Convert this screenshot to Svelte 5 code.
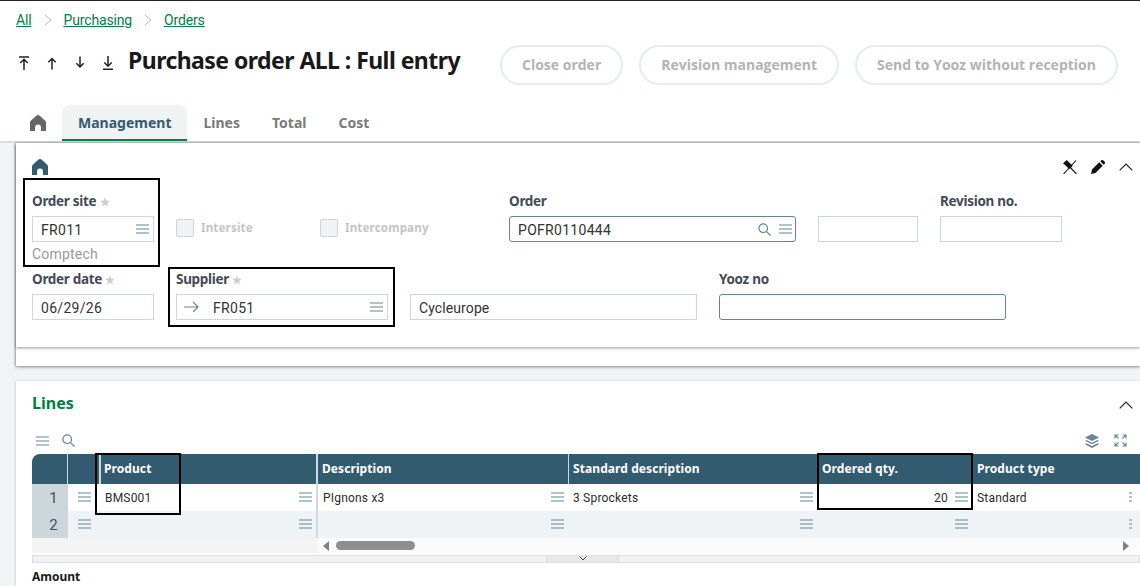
<script>
  const tabs = ['Lines', 'Total', 'Cost'];
  const cols = ['Product', 'Description', 'Standard description', 'Ordered qty.', 'Product type'];
  const rows = [
    { n: 1, cells: ['BMS001', 'PIgnons x3', '3 Sprockets', '20', 'Standard'] },
    { n: 2, cells: ['', '', '', '', ''] }
  ];
</script>

{#snippet menu(cls = '')}
  <svg class="menu {cls}" viewBox="0 0 13 10" aria-hidden="true"><path d="M0 1h13M0 5h13M0 9h13" /></svg>
{/snippet}
{#snippet home(cls = '')}
  <svg class="home {cls}" viewBox="0 0 16 16" aria-hidden="true"><path d="M0 16V7.500C0 6.600.4 6 1 5.400L6.500.6c.9-.8 2.100-.8 3 0L15 5.400c.6.6 1 1.200 1 2.100V16h-5v-3.500a3 3 0 0 0-6 0V16z" /></svg>
{/snippet}
{#snippet search(cls = '')}
  <svg class="search {cls}" viewBox="0 0 13 13" aria-hidden="true"><circle cx="5.200" cy="5.200" r="4.300" /><path d="M8.300 8.300l4.200 4.200" /></svg>
{/snippet}
{#snippet chevUp()}
  <svg class="chev" viewBox="0 0 14 8" aria-hidden="true"><path d="M.7 7.300L7 1l6.300 6.300" /></svg>
{/snippet}

<div class="page">
  <nav class="crumbs">
    <a href="#all">All</a><svg class="sep" viewBox="0 0 8 12"><path d="M1 1l6 5-6 5" /></svg>
    <a href="#purchasing">Purchasing</a><svg class="sep" viewBox="0 0 8 12"><path d="M1 1l6 5-6 5" /></svg>
    <a href="#orders">Orders</a>
  </nav>

  <header class="head">
    <div class="arrows">
      <svg viewBox="0 0 12 14"><path d="M1 1h10M6 14V3.500M2.300 7L6 3.300 9.700 7" /></svg>
      <svg viewBox="0 0 12 14"><path d="M6 13.500V2.500M2.300 6.200L6 2.500 9.700 6.200" /></svg>
      <svg viewBox="0 0 12 14"><path d="M6 .5v10.500M2.300 7.300L6 11 9.700 7.300" /></svg>
      <svg viewBox="0 0 12 14"><path d="M6 0v10M2.300 6.500L6 10.200 9.700 6.500M1 13.300h10" /></svg>
    </div>
    <h1>Purchase order ALL : Full entry</h1>
    <div class="actions">
      <button disabled>Close order</button>
      <button disabled>Revision management</button>
      <button disabled>Send to Yooz without reception</button>
    </div>
  </header>

  <div class="tabs">
    <span class="homeTab">{@render home()}</span>
    <span class="tab active">Management</span>
    {#each tabs as t}<span class="tab">{t}</span>{/each}
  </div>

  <main class="body">
    <section class="card form">
      <div class="formInner">
        <div class="cardTop">
          {@render home('blue')}
          <div class="tools">
            <svg class="pin" viewBox="0 0 14 14"><path d="M0 3.300L3.800 0l6 6-3.500 3z" fill="#111" /><path d="M.5 14L13 .5M4 4l9.500 10" fill="none" stroke="#111" stroke-width="1.100" /></svg>
            <svg class="pen" viewBox="0 0 14 14"><path d="M0 14l1-4.500L8.200 2.300l3.500 3.500L4.500 13zM9.200 1.300L10 .5c.7-.7 1.700-.7 2.400 0l1.100 1.100c.7.7.7 1.700 0 2.400l-.8.8z" /></svg>
            {@render chevUp()}
          </div>
        </div>
        <div class="row first">
          <div class="f w122">
            <label>Order site <i>★</i></label>
            <div class="input">FR011{@render menu('end')}</div>
            <div class="hint">Comptech</div>
          </div>
          <div class="check w122"><span class="box"></span>Intersite</div>
          <div class="check w122"><span class="box"></span>Intercompany</div>
          <div class="f w287 order">
            <label>Order</label>
            <div class="input focus">POFR0110444<span class="endIcons">{@render search()}{@render menu()}</span></div>
          </div>
          <div class="f w100"><label>&nbsp;</label><div class="input"></div></div>
          <div class="f w122"><label>Revision no.</label><div class="input"></div></div>
        </div>
        <div class="row second">
          <div class="f w122"><label>Order date <i>★</i></label><div class="input">06/29/26</div></div>
          <div class="f w212">
            <label>Supplier <i>★</i></label>
            <div class="input sup">
              <svg class="arrow" viewBox="0 0 15 12"><path d="M0 6h14M9 1l5 5-5 5" /></svg>FR051{@render menu('end')}
            </div>
          </div>
          <div class="f w287"><label>&nbsp;</label><div class="input small">Cycleurope</div></div>
          <div class="f w287"><label>Yooz no</label><div class="input focus"></div></div>
        </div>
      </div>
    </section>

    <section class="card lines">
      <div class="linesTop">
        <h2>Lines</h2>
        {@render chevUp()}
      </div>
      <div class="gridTools">
        {@render menu()}{@render search()}
        <span class="right">
          <svg class="layers" viewBox="0 0 16 14"><path d="M8 0l7 3.500-7 3.500-7-3.500z" /><path d="M2.500 6L8 8.800 13.500 6 15 6.800 8 10.300 1 6.800z" /><path d="M2.500 9.300L8 12 13.500 9.300 15 10.200 8 14 1 10.200z" /></svg>
          <svg class="expand" viewBox="0 0 13 13"><path d="M1 4.500V1h3.500M1 1l3.500 3.500M12 4.500V1H8.500M12 1L8.500 4.500M1 8.500V12h3.500M1 12l3.500-3.500M12 8.500V12H8.500M12 12L8.500 8.500" /></svg>
        </span>
      </div>
      <div class="table">
        <div class="thead">
          <span class="th corner"></span>
          <span class="th tool"></span>
          {#each cols as c, i}<span class="th c{i}">{c}</span>{/each}
        </div>
        {#each rows as r}
          <div class="tr">
            <span class="td num">{r.n}</span>
            <span class="td tool">{@render menu()}</span>
            {#each r.cells as cell, i}
              <span class="td c{i}" class:qty={i === 3}>
                <span class="val">{cell}</span>
                {#if i === 4}<span class="clipMenu">{@render menu()}</span>{:else}{@render menu()}{/if}
              </span>
            {/each}
          </div>
        {/each}
        <div class="scroll">
          <span class="scrollFill"></span>
          <div class="track">
            <svg viewBox="0 0 6 10"><path d="M6 0v10L0 5z" /></svg>
            <span class="thumb"></span>
            <svg class="next" viewBox="0 0 6 10"><path d="M0 0v10l6-5z" /></svg>
          </div>
        </div>
      </div>
      <div class="splitter"><span class="grip"><svg viewBox="0 0 8 5"><path d="M.5.500L4 4 7.500.500" /></svg></span></div>
      <div class="amount">Amount</div>
    </section>
  </main>

  <span class="mark m1"></span>
  <span class="mark m2"></span>
  <span class="mark m3"></span>
  <span class="mark m4"></span>
</div>

<style>
  :global(body) { margin: 0; background: #fff; }
  .page {
    position: relative; width: 1140px; height: 586px; overflow: hidden;
    border-top: 1px solid #222; box-sizing: border-box; background: #fff;
    font-family: "Noto Sans", sans-serif; color: #1a1a1a;
  }
  .crumbs { display: flex; align-items: center; height: 18px; padding: 10px 0 0 16px; font: 14px/18px Roboto, sans-serif; letter-spacing: -.15px; }
  .crumbs a { color: #007e45; text-decoration: underline; }
  .sep { width: 8px; height: 12px; margin: 0 12px; fill: none; stroke: #b8b8b8; stroke-width: 1; }
  .head { display: flex; align-items: center; height: 50px; margin-top: 6px; padding-left: 18px; }
  .arrows { display: flex; gap: 16px; width: 110px; flex: none; }
  .arrows svg { width: 12px; height: 14px; fill: none; stroke: #222; stroke-width: 1.500; margin-top: 5px; }
  h1 { margin: 0; width: 372px; flex: none; font: 700 23px/30px "Noto Sans", sans-serif; letter-spacing: -.55px; color: #191919; white-space: nowrap; }
  .actions { display: flex; gap: 16px; margin-top: 9px; }
  button {
    height: 40px; padding: 0 20px; border: 2px solid #e6ebed; border-radius: 20px; background: #fff;
    font: 700 14px/20px "Open Sans", sans-serif; color: #b3b3b3; white-space: nowrap;
  }
  .tabs { display: flex; height: 36px; margin-top: 20px; padding-left: 30px; align-items: stretch; font: 700 14px/20px "Noto Sans", sans-serif; color: #7b7b7b; }
  .homeTab { display: flex; align-items: center; width: 32px; }
  .home { width: 16px; height: 16px; fill: #666; }
  .home.blue { fill: #335b70; }
  .tab { display: flex; align-items: center; padding: 0 16px; }
  .tab.active { background: #f0f3f4; border-radius: 8px 8px 0 0; border-bottom: 2px solid #007e45; padding-top: 2px; color: #335b70; box-sizing: border-box; }
  .body { background: #f1f4f5; border-top: 2px solid #d9e0e3; padding-left: 16px; height: 444px; }
  .card { background: #fff; }
  .form { height: 223px; box-shadow: 0 1px 3px rgba(0,0,0,.4), -1px 0 2px rgba(0,0,0,.2); }
  .formInner { height: 204px; padding-left: 16px; box-sizing: border-box; box-shadow: 0 1px 3px rgba(0,0,0,.4); }
  .cardTop { display: flex; justify-content: space-between; align-items: center; height: 34px; padding: 14px 7px 0 0; box-sizing: border-box; }
  .tools { display: flex; align-items: center; gap: 14px; }
  .pin { width: 14px; height: 14px; }
  .pen { width: 14px; height: 14px; fill: #111; }
  .chev { width: 14px; height: 8px; fill: none; stroke: #222; stroke-width: 1.200; }
  .row { display: flex; gap: 22px; }
  .first { height: 93px; padding-top: 15px; box-sizing: border-box; }
  .second { height: 60px; }
  .w122 { width: 122px; } .w100 { width: 100px; } .w212 { width: 212px; } .w287 { width: 287px; }
  .order { margin-left: 45px; }
  .f { flex: none; }
  label { display: block; height: 18px; margin-bottom: 6px; font: 700 13.500px/18px "Noto Sans", sans-serif; color: #434a57; letter-spacing: -.3px; white-space: nowrap; }
  label i { font-style: normal; font-size: 11px; color: #ccc; }
  .input {
    position: relative; display: flex; align-items: center; height: 26px; padding: 1px 0 0 8px; box-sizing: border-box;
    border: 1px solid #ccd6db; font: 14px/24px Roboto, sans-serif; color: #333; letter-spacing: .3px;
  }
  .input.focus { border-color: #668592; border-radius: 3px; }
  .input.small { letter-spacing: .1px; }
  .input.sup { padding-left: 36px; }
  .arrow { position: absolute; left: 7px; top: 6px; width: 15px; height: 12px; fill: none; stroke: #668592; stroke-width: 1.100; }
  .menu { width: 13px; height: 10px; flex: none; fill: none; stroke: #668592; stroke-width: 1.100; }
  .menu.end { margin: -1px 4px 0 auto; }
  .endIcons { display: flex; align-items: center; gap: 8px; margin: -1px 3px 0 auto; }
  .search { width: 13px; height: 13px; fill: none; stroke: #668592; stroke-width: 1.200; }
  .hint { font: 14px/18px Roboto, sans-serif; color: #999; margin-top: 3px; letter-spacing: .2px; }
  .check { flex: none; display: flex; align-items: center; gap: 7px; height: 18px; margin-top: 27px; font: 700 11.500px/18px "Noto Sans", sans-serif; color: #c4c4c4; letter-spacing: .2px; }
  .box { width: 18px; height: 18px; box-sizing: border-box; border: 1px solid #ccd6db; border-radius: 2px; background: #f0f3f5; }
  .lines { height: 205px; margin-top: 15px; padding-left: 16px; box-shadow: -1px 0 2px rgba(0,0,0,.12); }
  .linesTop { display: flex; justify-content: space-between; align-items: center; height: 44px; padding-right: 7px; }
  .linesTop .chev { margin-top: 4px; }
  h2 { margin: 0; font: 700 16px/20px "Noto Sans", sans-serif; color: #007e45; }
  .gridTools { display: flex; align-items: center; gap: 13px; height: 29px; padding: 2px 13px 0 4px; box-sizing: border-box; }
  .right { display: flex; align-items: center; gap: 14px; margin-left: auto; }
  .layers { width: 16px; height: 14px; fill: #668592; }
  .expand { width: 13px; height: 13px; fill: none; stroke: #668592; stroke-width: 1.100; }
  .table { width: 1108px; font: 12px/16px Roboto, sans-serif; }
  .thead, .tr, .scroll { display: flex; }
  .thead { height: 30px; background: #335b70; border-radius: 8px 0 0 0; }
  .th { display: flex; align-items: center; padding-left: 4px; box-sizing: border-box; font: 700 12px/16px "Noto Sans", sans-serif; letter-spacing: .08px; color: #fff; border-right: 1px solid #cfd9dd; white-space: nowrap; }
  .corner, .num { width: 36px; flex: none; }
  .tool { width: 32px; flex: none; }
  .th.corner, .th.tool { padding: 0; }
  .c0 { width: 218px; flex: none; }
  .c1 { width: 251px; flex: none; }
  .c2 { width: 249px; flex: none; }
  .c3 { width: 155px; flex: none; }
  .c4 { width: 167px; flex: none; border-right: 0; }
  .th.c0 { border-right: 2px solid #d0dade; border-left: 1px solid #cfd9dd; padding-left: 3px; }
  .tr { height: 27px; background: #fff; }
  .tr + .tr { background: #f0f3f5; }
  .td { display: flex; align-items: center; box-sizing: border-box; padding: 0 5px; color: #2b2b2b; letter-spacing: .2px; }
  .td.num { justify-content: flex-end; padding-right: 10px; background: #ccd6db; font-size: 15px; color: #444f5f; }
  .td.tool { padding-left: 10px; }
  .td.c0 { padding-left: 5px; border-right: 2px solid #d0dade; }
  .td.c2, .td.c4 { padding-left: 4px; }
  .val { flex: 1; overflow: hidden; white-space: nowrap; }
  .td.qty .val { text-align: right; padding-right: 7px; }
  .td .menu { margin-right: 0; margin-bottom: 2px; }
  .td.c0 .menu { margin-right: -1px; }
  .clipMenu { width: 3px; overflow: hidden; display: flex; margin-right: 3px; }
  .scroll { height: 15px; }
  .scrollFill { width: 286px; background: #f4f4f4; }
  .track { flex: 1; display: flex; align-items: center; padding: 0 11px 0 5px; background: #fbfbfb; }
  .track svg { width: 6px; height: 10px; fill: #808080; }
  .thumb { width: 79px; height: 9px; margin-left: 7px; border-radius: 5px; background: #8e8e8e; }
  .next { margin-left: auto; }
  .splitter { width: 1106px; height: 6px; margin-top: 2px; background: #f0f3f5; border: 1px solid #dcdfdf; display: flex; justify-content: center; }
  .grip { width: 71px; margin-left: -7px; height: 6px; background: #e4e8ea; border-left: 1px solid #dcdfdf; border-right: 1px solid #dcdfdf; display: flex; justify-content: center; }
  .grip svg { width: 8px; height: 5px; fill: none; stroke: #444; stroke-width: 1; }
  .amount { margin-top: 6px; font: 700 12px/16px "Noto Sans", sans-serif; color: #191919; }
  .mark { position: absolute; border: 2px solid #000; box-sizing: border-box; pointer-events: none; }
  .m1 { left: 23px; top: 177px; width: 137px; height: 89px; }
  .m2 { left: 168px; top: 266px; width: 227px; height: 60px; }
  .m3 { left: 95px; top: 452px; width: 86px; height: 62px; }
  .m4 { left: 817px; top: 452px; width: 156px; height: 57px; }
</style>
